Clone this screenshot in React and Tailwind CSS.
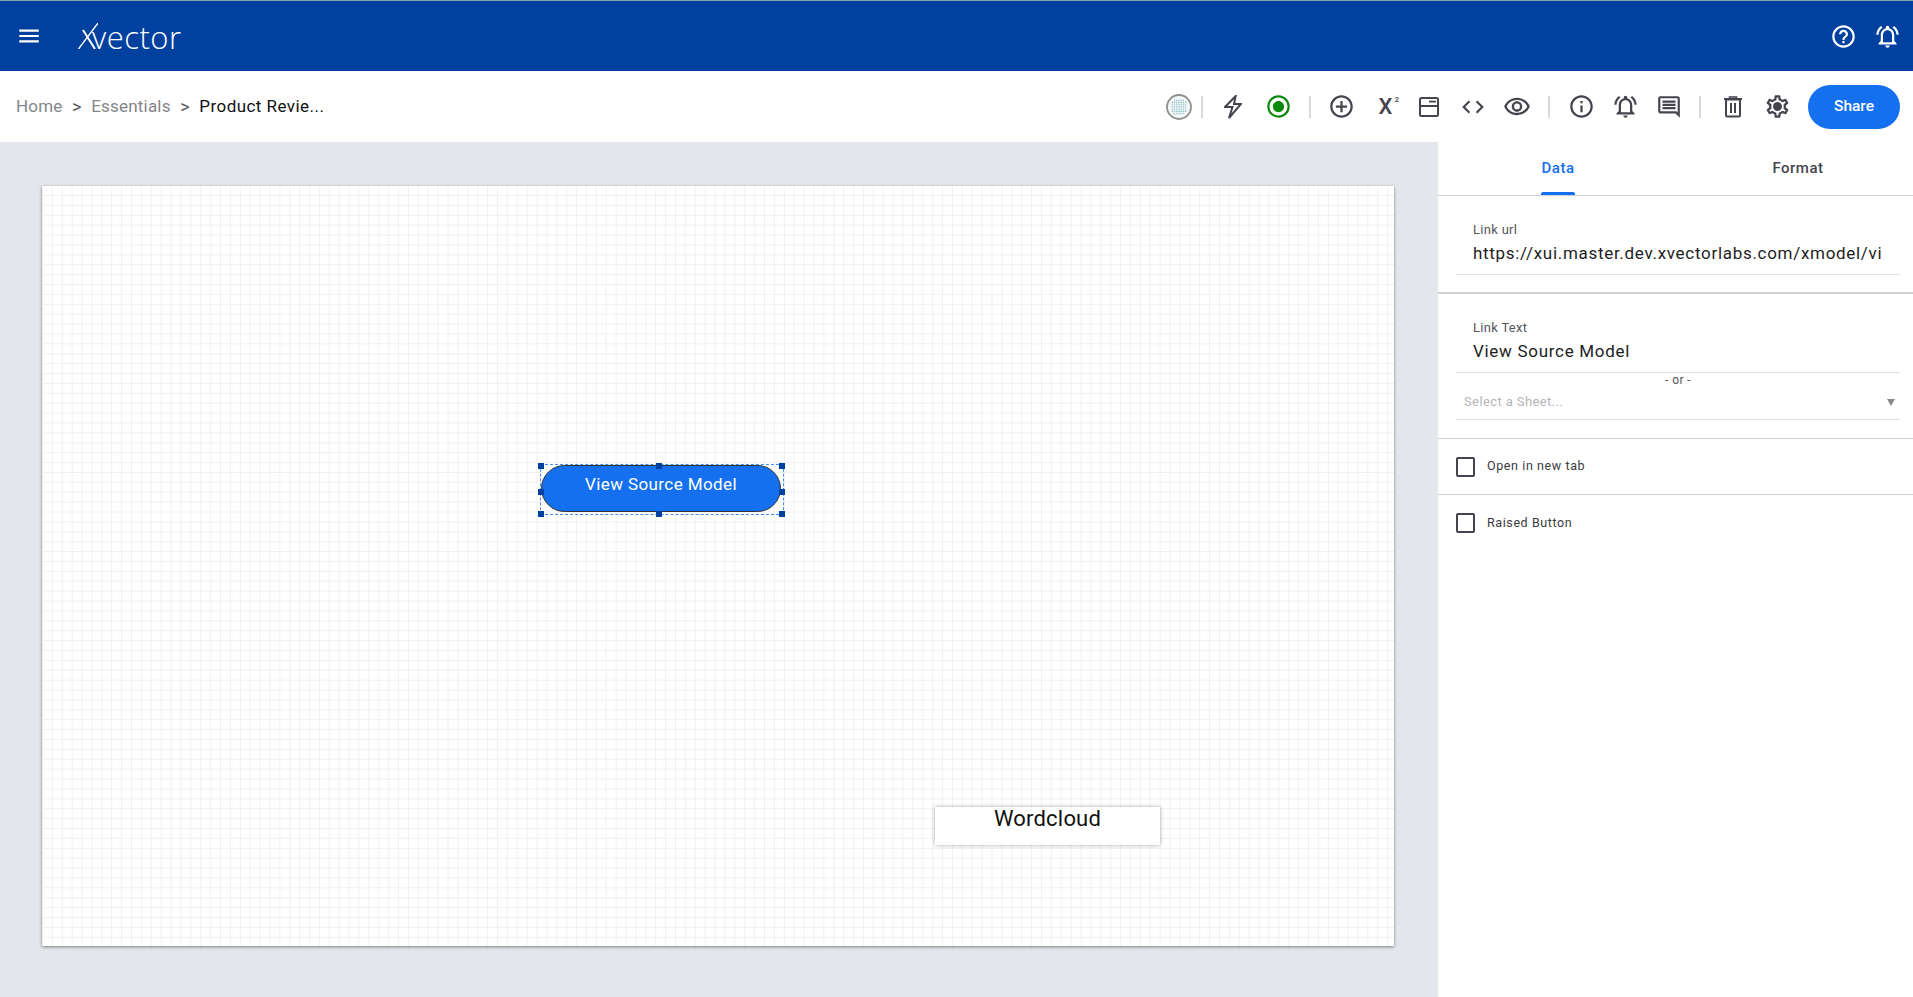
import React from 'react';
import {
  MdMenu, MdHelpOutline, MdOutlineNotificationsActive, MdRadioButtonChecked, MdAddCircleOutline,
  MdCode, MdOutlineVisibility, MdInfoOutline, MdOutlineComment, MdOutlineSettings,
} from 'react-icons/md';

function Sep({ className }) {
  return <div className={`w-[2px] h-[22px] bg-[#d9d9d9] ${className}`} />;
}

function Bolt() {
  return (
    <svg viewBox="-1 -1 18 24" className="w-[18px] h-[24px]" fill="none" stroke="#44444f" strokeWidth="2">
      <path d="M10.7 0 L0 11 H7.5 L4 22 L16 8 H9 Z" />
    </svg>
  );
}

function LayoutIcon() {
  return (
    <svg viewBox="0 0 20 20" className="w-[20px] h-[20px]" fill="none" stroke="#44444f" strokeWidth="2">
      <rect x="1" y="1" width="18" height="18" rx="1.5" />
      <path d="M1 9 H19" />
      <path d="M10 4.6 H17" strokeWidth="1.8" />
    </svg>
  );
}

function Trash() {
  return (
    <svg viewBox="0 0 20 22" className="w-[20px] h-[22px]" fill="none" stroke="#44444f" strokeWidth="2">
      <path d="M1 3 H19" />
      <path d="M6.5 3 V1 H13.5 V3" strokeWidth="1.6" />
      <rect x="3" y="3.5" width="14" height="17" rx="1.2" />
      <path d="M8 7 V17 M12 7 V17" />
    </svg>
  );
}

function Gear() {
  return (
    <div className="relative ml-[20.5px] w-[27px] h-[27px]">
      <MdOutlineSettings className="w-[27px] h-[27px]" />
      <div className="absolute left-[10px] top-[10px] w-[7px] h-[7px] rounded-full bg-[#44444f]" />
    </div>
  );
}

function Avatar() {
  const dots = [];
  for (let r = 0; r < 7; r++) {
    for (let c = 0; c < 7; c++) {
      if (Math.abs(r - 3) + Math.abs(c - 3) < 6) {
        dots.push(<circle key={`${r}-${c}`} cx={6.4 + c * 2.2} cy={6.4 + r * 2.2} r="0.8" fill={r % 2 ? '#8fc4c6' : '#a5c8d8'} />);
      }
    }
  }
  return (
    <svg viewBox="0 0 26 26" className="w-[26px] h-[26px]">
      <circle cx="13" cy="13" r="12" fill="#f2f7f7" stroke="#8e8e8e" strokeWidth="1.8" />
      {dots}
    </svg>
  );
}

function Logo() {
  return (
    <div className="flex items-end ml-[36px] h-[26px] text-white">
      <svg viewBox="0 0 20 26" className="w-[20px] h-[26px]" fill="none" stroke="white">
        <path d="M0.5 26 L20 0" strokeWidth="1.4" />
        <path d="M5 7 L17 26" strokeWidth="2" />
      </svg>
      <span className="-ml-[6px] font-['Open_Sans',sans-serif] font-light text-[31px] leading-[34px] tracking-[0.5px] -mb-[4.5px]">vector</span>
    </div>
  );
}

function Field({ label, value }) {
  return (
    <div className="ml-[18px] mr-[13px] h-[53px] border-b border-[#e3e3e6] pl-[17px] overflow-hidden">
      <div className="text-[13px] leading-[16px] tracking-[0.3px] text-[#55555c]">{label}</div>
      <div className="text-[17px] leading-[24px] mt-[3px] tracking-[0.7px] text-[#1d1d22] whitespace-nowrap overflow-hidden">{value}</div>
    </div>
  );
}

function CheckRow({ label }) {
  return (
    <div className="flex items-center h-[56px] pl-[18px] border-b border-[#cfcfd6] last:border-b-0">
      <div className="w-[19px] h-[20px] border-2 border-[#44444f] rounded-[2px]" />
      <span className="ml-[12px] text-[12.5px] tracking-[0.6px] text-[#3a3a42]">{label}</span>
    </div>
  );
}

function Handle({ className }) {
  return <div className={`absolute w-[6px] h-[6px] bg-[#0041a0] ${className}`} />;
}

export default function App() {
  return (
    <div className="w-[1913px] h-[997px] overflow-hidden flex flex-col font-['Roboto',sans-serif] bg-white">
      <header className="h-[71px] shrink-0 bg-[#00419f] border-t border-[#7fa6a8] flex items-center pl-[16px] pr-[12.5px]">
        <MdMenu className="text-white w-[26px] h-[26px]" />
        <Logo />
        <div className="ml-auto flex items-center gap-[17px]">
          <MdHelpOutline className="text-white w-[27px] h-[27px]" />
          <MdOutlineNotificationsActive className="text-white w-[27px] h-[27px]" />
        </div>
      </header>

      <div className="h-[71px] shrink-0 flex items-center pl-[16px] pr-[13px]">
        <nav className="flex items-center text-[17px] tracking-[0.2px] text-[#85858a]">
          <span>Home</span>
          <span className="mx-[9.5px] text-[18px] text-[#55555c]">&gt;</span>
          <span>Essentials</span>
          <span className="mx-[9.5px] text-[18px] text-[#55555c]">&gt;</span>
          <span className="text-[#111] tracking-[0.45px]">Product Revie...</span>
        </nav>
        <div className="ml-auto flex items-center text-[#44444f]">
          <Avatar />
          <Sep className="ml-[9.5px]" />
          <div className="ml-[21px] flex"><Bolt /></div>
          <MdRadioButtonChecked className="ml-[22.5px] text-[#0a8a0a] w-[27px] h-[27px]" />
          <Sep className="ml-[17.5px]" />
          <MdAddCircleOutline className="ml-[16.5px] w-[27px] h-[27px]" />
          <span className="ml-[24px] w-[24.5px] text-[22px] font-medium leading-none relative">X<sup className="text-[8px] leading-none absolute top-[0px] left-[16px]">2</sup></span>
          <div className="ml-[16px] flex"><LayoutIcon /></div>
          <MdCode className="ml-[21px] w-[26px] h-[26px]" />
          <MdOutlineVisibility className="ml-[17px] w-[28px] h-[28px]" />
          <Sep className="ml-[17px]" />
          <MdInfoOutline className="ml-[17.5px] w-[27px] h-[27px]" />
          <MdOutlineNotificationsActive className="ml-[17px] w-[27px] h-[27px]" />
          <MdOutlineComment className="ml-[17.5px] w-[26px] h-[26px]" />
          <Sep className="ml-[17px]" />
          <div className="ml-[22px] flex"><Trash /></div>
          <Gear />
          <button className="ml-[17.5px] w-[92px] h-[44px] rounded-full bg-[#1470ef] text-white text-[15.5px] font-medium">Share</button>
        </div>
      </div>

      <div className="flex-1 flex min-h-0">
        <main className="w-[1438px] shrink-0 bg-[#e3e6ea] pl-[42px] pt-[44px]">
          <div className="relative w-[1352px] h-[760px] bg-white shadow-[0_1px_3px_rgba(0,0,0,0.45)] bg-[linear-gradient(#f0f0f0_1px,transparent_1px),linear-gradient(90deg,#f0f0f0_1px,transparent_1px)] bg-[size:9.9px_9.9px] bg-[position:0_9px]">
            <div className="absolute left-[498px] top-[278px] w-[244px] h-[51px] border border-dashed border-[#3f8ef0]">
              <button className="block w-[240px] h-[47px] rounded-full bg-[#1470ef] border border-[#333] text-white text-[17px] tracking-[0.4px] pb-[7px]">View Source Model</button>
              <Handle className="-left-[3px] -top-[2px]" />
              <Handle className="left-[115px] -top-[2px]" />
              <Handle className="-right-[2px] -top-[2px]" />
              <Handle className="-left-[3px] top-[24px]" />
              <Handle className="-right-[2px] top-[24px]" />
              <Handle className="-left-[3px] -bottom-[3px]" />
              <Handle className="left-[115px] -bottom-[3px]" />
              <Handle className="-right-[2px] -bottom-[3px]" />
            </div>
            <div className="absolute left-[893px] top-[621px] w-[225px] h-[38px] bg-white shadow-[0_0_4px_rgba(0,0,0,0.35)] text-center text-[22px] leading-[24px] tracking-[0.2px] text-[#111]">Wordcloud</div>
          </div>
        </main>

        <aside className="flex-1 min-w-0 bg-white">
          <div className="flex h-[54px] border-b border-[#cfcfd6]">
            <div className="w-[240px] shrink-0 relative flex justify-center pt-[18px] text-[15px] leading-[16px] font-medium tracking-[0.5px] text-[#1470ef]">
              Data
              <div className="absolute bottom-0 left-[103px] w-[34px] h-[3px] rounded-t-[2px] bg-[#1470ef]" />
            </div>
            <div className="w-[240px] shrink-0 flex justify-center pt-[18px] text-[15px] leading-[16px] font-medium tracking-[0.5px] text-[#44444f]">Format</div>
          </div>

          <div className="h-[98px] border-b-2 border-[#cfcfd6] pt-[26px]">
            <Field label="Link url" value="https://xui.master.dev.xvectorlabs.com/xmodel/vi" />
          </div>

          <div className="h-[145px] border-b border-[#cfcfd6] pt-[26px]">
            <Field label="Link Text" value="View Source Model" />
            <div className="ml-[18px] mr-[13px] text-center text-[12px] leading-[14px] tracking-[0.4px] text-[#55555c]">- or -</div>
            <div className="ml-[18px] mr-[13px] h-[33px] border-b border-[#e3e3e6] pl-[8px] pb-[2px] flex items-center justify-between pr-[5px]">
              <span className="text-[13px] tracking-[0.4px] text-[#b4b4b8]">Select a Sheet...</span>
              <span className="w-0 h-0 border-l-[4px] border-r-[4px] border-t-[7px] border-l-transparent border-r-transparent border-t-[#8a8a8f]" />
            </div>
          </div>

          <CheckRow label="Open in new tab" />
          <CheckRow label="Raised Button" />
        </aside>
      </div>
    </div>
  );
}
